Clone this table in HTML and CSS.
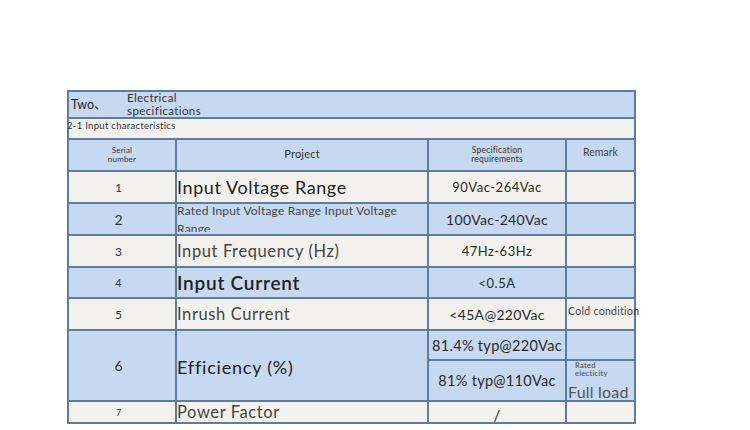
FILE: index.html
```html
<!DOCTYPE html>
<html lang="en">
<head>
<meta charset="utf-8">
<title>Electrical specifications</title>
<link rel="stylesheet" href="styles.css">
</head>
<body>
<div class="sheet">
  <div class="cell blue span title">
    <span class="t-num">Two、</span>
    <span class="t-name">Electrical<br>specifications</span>
  </div>
  <div class="cell cream span sub">2-1 Input characteristics</div>

  <div class="cell blue c hd-small">Serial<br>number</div>
  <div class="cell blue c hd-project">Project</div>
  <div class="cell blue c hd-small hd-spec">Specification<br>requirements</div>
  <div class="cell blue c hd-remark">Remark</div>

  <div class="cell cream num n12">1</div>
  <div class="cell cream proj p-ivr">Input Voltage Range</div>
  <div class="cell cream c spec s13">90Vac-264Vac</div>
  <div class="cell cream"></div>

  <div class="cell blue num n14">2</div>
  <div class="cell blue proj p-rated"><div class="clip">Rated Input Voltage Range Input Voltage Range</div></div>
  <div class="cell blue c spec s14">100Vac-240Vac</div>
  <div class="cell blue"></div>

  <div class="cell cream num n12">3</div>
  <div class="cell cream proj p-light">Input Frequency (Hz)</div>
  <div class="cell cream c spec s13">47Hz-63Hz</div>
  <div class="cell cream"></div>

  <div class="cell blue num n11">4</div>
  <div class="cell blue proj p-ic">Input Current</div>
  <div class="cell blue c spec s13">&lt;0.5A</div>
  <div class="cell blue"></div>

  <div class="cell cream num n12">5</div>
  <div class="cell cream proj p-light">Inrush Current</div>
  <div class="cell cream c spec s14">&lt;45A@220Vac</div>
  <div class="cell cream remark-cold">Cold condition</div>

  <div class="cell blue num n14 r6">6</div>
  <div class="cell blue proj p-eff r6">Efficiency (%)</div>
  <div class="cell blue c spec s145">81.4% typ@220Vac</div>
  <div class="cell blue"></div>
  <div class="cell blue c spec s145">81% typ@110Vac</div>
  <div class="cell blue remark-full">
    <span class="rated">Rated<br>electicity</span>
    <span class="full">Full load</span>
  </div>

  <div class="cell cream num n9">7</div>
  <div class="cell cream proj p-light">Power Factor</div>
  <div class="cell cream c spec slash">/</div>
  <div class="cell cream"></div>
</div>
</body>
</html>
```

FILE: styles.css
```css
html, body {
  margin: 0;
  padding: 0;
  background: #ffffff;
}

body {
  font-family: Lato, "Open Sans", "Noto Sans CJK SC", sans-serif;
  color: #2b2b2b;
}

.sheet {
  display: grid;
  grid-template-columns: 106px 250px 136px 67px;
  grid-template-rows: 25px 19px 30px 30px 30px 30px 29px 30px 28px 39px 20px;
  gap: 2px;
  padding: 2px;
  width: 565px;
  margin: 90px 0 0 67px;
  background: #5d7ca2;
}

.cell {
  display: flex;
  align-items: center;
  min-width: 0;
  overflow: visible;
  white-space: nowrap;
  box-sizing: border-box;
}

.blue { background: #c6d9f1; }
.cream { background: #f3f1ee; }

.span { grid-column: 1 / -1; }

.c { justify-content: center; text-align: center; }

/* title rows */
.title { padding-left: 2px; }
.t-num { font-size: 12.5px; width: 56px; margin-top: -2px; color: #222; }
.t-name { font-size: 11.5px; line-height: 12.5px; color: #333; letter-spacing: 0.4px; }

.sub {
  font-size: 9.5px;
  letter-spacing: 0.3px;
  text-indent: -2px;
  align-items: flex-start;
  padding-top: 1px;
  color: #333;
}

/* header */
.hd-small { font-size: 8px; line-height: 9px; color: #333; letter-spacing: 0.2px; }
.hd-spec { font-size: 8.5px; }
.hd-project { font-size: 11px; color: #333; padding-bottom: 4px; letter-spacing: 0.2px; }
.hd-remark { font-size: 10.5px; color: #444; padding-bottom: 6px; }

/* serial numbers */
.num { justify-content: center; padding-right: 7px; color: #333; }
.n9 { font-size: 9px; }
.n11 { font-size: 11px; }
.n12 { font-size: 12px; }
.n14 { font-size: 14px; }

.r6 { grid-row: 9 / span 2; }

/* project column */
.proj { padding-left: 0; letter-spacing: 0.6px; }
.p-ivr { font-size: 18px; color: #222; }
.p-ic { font-size: 19px; color: #222; font-weight: 600; letter-spacing: 0.75px; }
.p-eff { font-size: 18px; color: #222; letter-spacing: 0.8px; padding-top: 2px; }
.p-light { font-size: 16.5px; color: #444; }
.p-rated { align-items: flex-start; letter-spacing: 0.2px; }
.p-rated .clip {
  font-size: 12px;
  line-height: 18px;
  height: 30px;
  overflow: hidden;
  white-space: normal;
  width: 238px;
  color: #444;
  margin-top: -2px;
}

/* spec column */
.spec { color: #2a2a2a; letter-spacing: 0.3px; }
.s13 { font-size: 13px; letter-spacing: 0.5px; }
.s14 { font-size: 14px; }
.s145 { font-size: 14.5px; }
.slash { font-size: 15px; padding-top: 6px; }

/* remark column */
.remark-cold {
  font-size: 10.5px;
  letter-spacing: 0.3px;
  color: #444;
  padding-left: 1px;
  padding-bottom: 6px;
}
.remark-full {
  flex-direction: column;
  align-items: flex-start;
  justify-content: space-between;
  padding-left: 1px;
}
.rated {
  font-size: 7.5px;
  line-height: 8px;
  color: #444;
  padding-left: 7px;
  margin-top: 1px;
  letter-spacing: 0.3px;
}
.full {
  font-size: 16px;
  line-height: 17px;
  color: #555;
  letter-spacing: 0.2px;
}
```
